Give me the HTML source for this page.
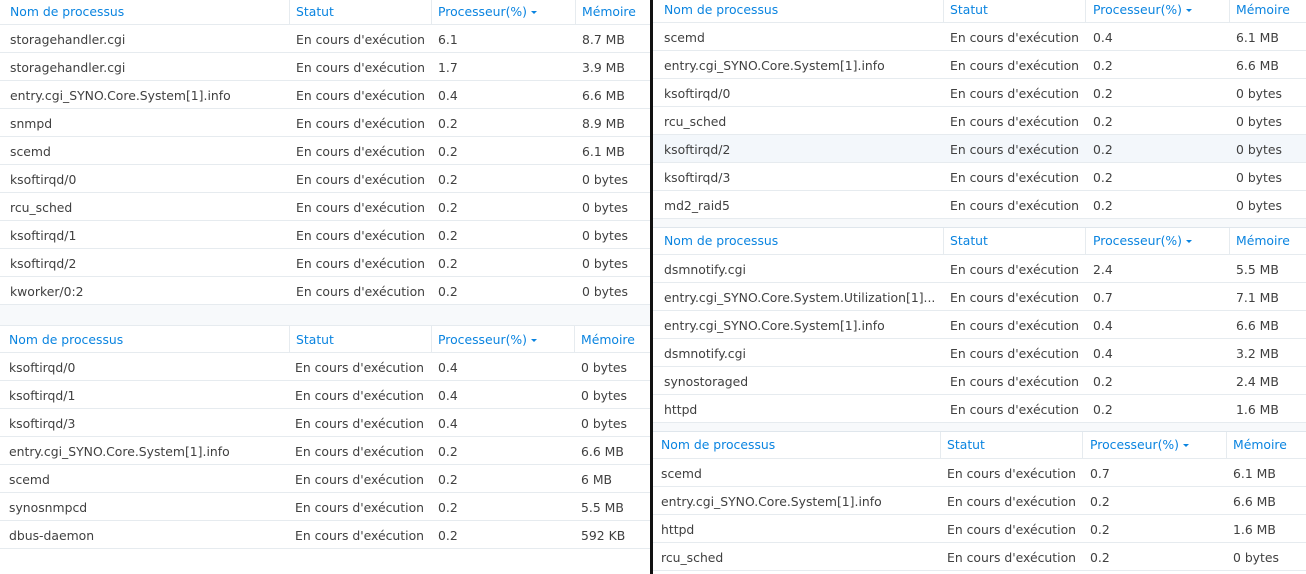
<!DOCTYPE html><html><head><meta charset="utf-8"><style>
*{margin:0;padding:0;box-sizing:border-box}
body{width:1306px;height:574px;background:#fff;position:relative;overflow:hidden;font-family:"DejaVu Sans","Liberation Sans",sans-serif;font-size:12.4px;color:#404040}
.t{position:absolute;background:#fff}
.h,.r{position:relative;border-bottom:1px solid #e6ebef}
.h{color:#0a84e0}
.h span,.r span{position:absolute;white-space:nowrap}
.r span{top:1px}
.h i{position:absolute;top:0;bottom:0;width:1px;background:#e6ebef}
.car{display:inline-block;border-left:3px solid transparent;border-right:3px solid transparent;border-top:3px solid #0a84e0;vertical-align:middle;margin-left:4px}
.hl{background:#f3f7fb}
.bar{position:absolute;left:650px;top:0;width:3px;height:574px;background:#111}
.gap{position:absolute;background:#f7f9fb}
</style></head><body>
<div class="gap" style="left:0;top:305px;width:650px;height:20px"></div>
<div class="gap" style="left:653px;top:219px;width:653px;height:8px"></div>
<div class="gap" style="left:653px;top:423px;width:653px;height:8px"></div>

<div class="t" style="left:0;top:0;width:650px">
<div class="h" style="height:25px;line-height:24px"><span style="left:10px">Nom de processus</span><i style="left:289px"></i><span style="left:296px">Statut</span><i style="left:431px"></i><span style="left:438px">Processeur(%)<b class="car"></b></span><i style="left:575px"></i><span style="left:582px">Mémoire</span></div>
<div class="r" style="height:28px;line-height:28px"><span style="left:10px">storagehandler.cgi</span><span style="left:296px">En cours d'exécution</span><span style="left:438px">6.1</span><span style="left:582px">8.7 MB</span></div>
<div class="r" style="height:28px;line-height:28px"><span style="left:10px">storagehandler.cgi</span><span style="left:296px">En cours d'exécution</span><span style="left:438px">1.7</span><span style="left:582px">3.9 MB</span></div>
<div class="r" style="height:28px;line-height:28px"><span style="left:10px">entry.cgi_SYNO.Core.System[1].info</span><span style="left:296px">En cours d'exécution</span><span style="left:438px">0.4</span><span style="left:582px">6.6 MB</span></div>
<div class="r" style="height:28px;line-height:28px"><span style="left:10px">snmpd</span><span style="left:296px">En cours d'exécution</span><span style="left:438px">0.2</span><span style="left:582px">8.9 MB</span></div>
<div class="r" style="height:28px;line-height:28px"><span style="left:10px">scemd</span><span style="left:296px">En cours d'exécution</span><span style="left:438px">0.2</span><span style="left:582px">6.1 MB</span></div>
<div class="r" style="height:28px;line-height:28px"><span style="left:10px">ksoftirqd/0</span><span style="left:296px">En cours d'exécution</span><span style="left:438px">0.2</span><span style="left:582px">0 bytes</span></div>
<div class="r" style="height:28px;line-height:28px"><span style="left:10px">rcu_sched</span><span style="left:296px">En cours d'exécution</span><span style="left:438px">0.2</span><span style="left:582px">0 bytes</span></div>
<div class="r" style="height:28px;line-height:28px"><span style="left:10px">ksoftirqd/1</span><span style="left:296px">En cours d'exécution</span><span style="left:438px">0.2</span><span style="left:582px">0 bytes</span></div>
<div class="r" style="height:28px;line-height:28px"><span style="left:10px">ksoftirqd/2</span><span style="left:296px">En cours d'exécution</span><span style="left:438px">0.2</span><span style="left:582px">0 bytes</span></div>
<div class="r" style="height:28px;line-height:28px"><span style="left:10px">kworker/0:2</span><span style="left:296px">En cours d'exécution</span><span style="left:438px">0.2</span><span style="left:582px">0 bytes</span></div>
</div>

<div class="t" style="left:0;top:325px;width:650px;border-top:1px solid #e6ebef">
<div class="h" style="height:27px;line-height:27px"><span style="left:9px">Nom de processus</span><i style="left:289px"></i><span style="left:296px">Statut</span><i style="left:431px"></i><span style="left:438px">Processeur(%)<b class="car"></b></span><i style="left:574px"></i><span style="left:581px">Mémoire</span></div>
<div class="r" style="height:28px;line-height:28px"><span style="left:9px">ksoftirqd/0</span><span style="left:295px">En cours d'exécution</span><span style="left:438px">0.4</span><span style="left:581px">0 bytes</span></div>
<div class="r" style="height:28px;line-height:28px"><span style="left:9px">ksoftirqd/1</span><span style="left:295px">En cours d'exécution</span><span style="left:438px">0.4</span><span style="left:581px">0 bytes</span></div>
<div class="r" style="height:28px;line-height:28px"><span style="left:9px">ksoftirqd/3</span><span style="left:295px">En cours d'exécution</span><span style="left:438px">0.4</span><span style="left:581px">0 bytes</span></div>
<div class="r" style="height:28px;line-height:28px"><span style="left:9px">entry.cgi_SYNO.Core.System[1].info</span><span style="left:295px">En cours d'exécution</span><span style="left:438px">0.2</span><span style="left:581px">6.6 MB</span></div>
<div class="r" style="height:28px;line-height:28px"><span style="left:9px">scemd</span><span style="left:295px">En cours d'exécution</span><span style="left:438px">0.2</span><span style="left:581px">6 MB</span></div>
<div class="r" style="height:28px;line-height:28px"><span style="left:9px">synosnmpcd</span><span style="left:295px">En cours d'exécution</span><span style="left:438px">0.2</span><span style="left:581px">5.5 MB</span></div>
<div class="r" style="height:28px;line-height:28px"><span style="left:9px">dbus-daemon</span><span style="left:295px">En cours d'exécution</span><span style="left:438px">0.2</span><span style="left:581px">592 KB</span></div>
</div>

<div class="t" style="left:653px;top:0;width:653px">
<div class="h" style="height:23px;line-height:20px"><span style="left:11px">Nom de processus</span><i style="left:290px"></i><span style="left:297px">Statut</span><i style="left:432px"></i><span style="left:440px">Processeur(%)<b class="car"></b></span><i style="left:576px"></i><span style="left:583px">Mémoire</span></div>
<div class="r" style="height:28px;line-height:28px"><span style="left:11px">scemd</span><span style="left:297px">En cours d'exécution</span><span style="left:440px">0.4</span><span style="left:583px">6.1 MB</span></div>
<div class="r" style="height:28px;line-height:28px"><span style="left:11px">entry.cgi_SYNO.Core.System[1].info</span><span style="left:297px">En cours d'exécution</span><span style="left:440px">0.2</span><span style="left:583px">6.6 MB</span></div>
<div class="r" style="height:28px;line-height:28px"><span style="left:11px">ksoftirqd/0</span><span style="left:297px">En cours d'exécution</span><span style="left:440px">0.2</span><span style="left:583px">0 bytes</span></div>
<div class="r" style="height:28px;line-height:28px"><span style="left:11px">rcu_sched</span><span style="left:297px">En cours d'exécution</span><span style="left:440px">0.2</span><span style="left:583px">0 bytes</span></div>
<div class="r hl" style="height:28px;line-height:28px"><span style="left:11px">ksoftirqd/2</span><span style="left:297px">En cours d'exécution</span><span style="left:440px">0.2</span><span style="left:583px">0 bytes</span></div>
<div class="r" style="height:28px;line-height:28px"><span style="left:11px">ksoftirqd/3</span><span style="left:297px">En cours d'exécution</span><span style="left:440px">0.2</span><span style="left:583px">0 bytes</span></div>
<div class="r" style="height:28px;line-height:28px"><span style="left:11px">md2_raid5</span><span style="left:297px">En cours d'exécution</span><span style="left:440px">0.2</span><span style="left:583px">0 bytes</span></div>
</div>

<div class="t" style="left:653px;top:227px;width:653px;border-top:1px solid #dfe6ec">
<div class="h" style="height:27px;line-height:26px"><span style="left:11px">Nom de processus</span><i style="left:290px"></i><span style="left:297px">Statut</span><i style="left:432px"></i><span style="left:440px">Processeur(%)<b class="car"></b></span><i style="left:576px"></i><span style="left:583px">Mémoire</span></div>
<div class="r" style="height:28px;line-height:28px"><span style="left:11px">dsmnotify.cgi</span><span style="left:297px">En cours d'exécution</span><span style="left:440px">2.4</span><span style="left:583px">5.5 MB</span></div>
<div class="r" style="height:28px;line-height:28px"><span style="left:11px">entry.cgi_SYNO.Core.System.Utilization[1]...</span><span style="left:297px">En cours d'exécution</span><span style="left:440px">0.7</span><span style="left:583px">7.1 MB</span></div>
<div class="r" style="height:28px;line-height:28px"><span style="left:11px">entry.cgi_SYNO.Core.System[1].info</span><span style="left:297px">En cours d'exécution</span><span style="left:440px">0.4</span><span style="left:583px">6.6 MB</span></div>
<div class="r" style="height:28px;line-height:28px"><span style="left:11px">dsmnotify.cgi</span><span style="left:297px">En cours d'exécution</span><span style="left:440px">0.4</span><span style="left:583px">3.2 MB</span></div>
<div class="r" style="height:28px;line-height:28px"><span style="left:11px">synostoraged</span><span style="left:297px">En cours d'exécution</span><span style="left:440px">0.2</span><span style="left:583px">2.4 MB</span></div>
<div class="r" style="height:28px;line-height:28px"><span style="left:11px">httpd</span><span style="left:297px">En cours d'exécution</span><span style="left:440px">0.2</span><span style="left:583px">1.6 MB</span></div>
</div>

<div class="t" style="left:653px;top:431px;width:653px;border-top:1px solid #dfe6ec">
<div class="h" style="height:27px;line-height:26px"><span style="left:8px">Nom de processus</span><i style="left:287px"></i><span style="left:294px">Statut</span><i style="left:429px"></i><span style="left:437px">Processeur(%)<b class="car"></b></span><i style="left:573px"></i><span style="left:580px">Mémoire</span></div>
<div class="r" style="height:28px;line-height:28px"><span style="left:8px">scemd</span><span style="left:294px">En cours d'exécution</span><span style="left:437px">0.7</span><span style="left:580px">6.1 MB</span></div>
<div class="r" style="height:28px;line-height:28px"><span style="left:8px">entry.cgi_SYNO.Core.System[1].info</span><span style="left:294px">En cours d'exécution</span><span style="left:437px">0.2</span><span style="left:580px">6.6 MB</span></div>
<div class="r" style="height:28px;line-height:28px"><span style="left:8px">httpd</span><span style="left:294px">En cours d'exécution</span><span style="left:437px">0.2</span><span style="left:580px">1.6 MB</span></div>
<div class="r" style="height:28px;line-height:28px"><span style="left:8px">rcu_sched</span><span style="left:294px">En cours d'exécution</span><span style="left:437px">0.2</span><span style="left:580px">0 bytes</span></div>
</div>

<div class="bar"></div>
</body></html>
